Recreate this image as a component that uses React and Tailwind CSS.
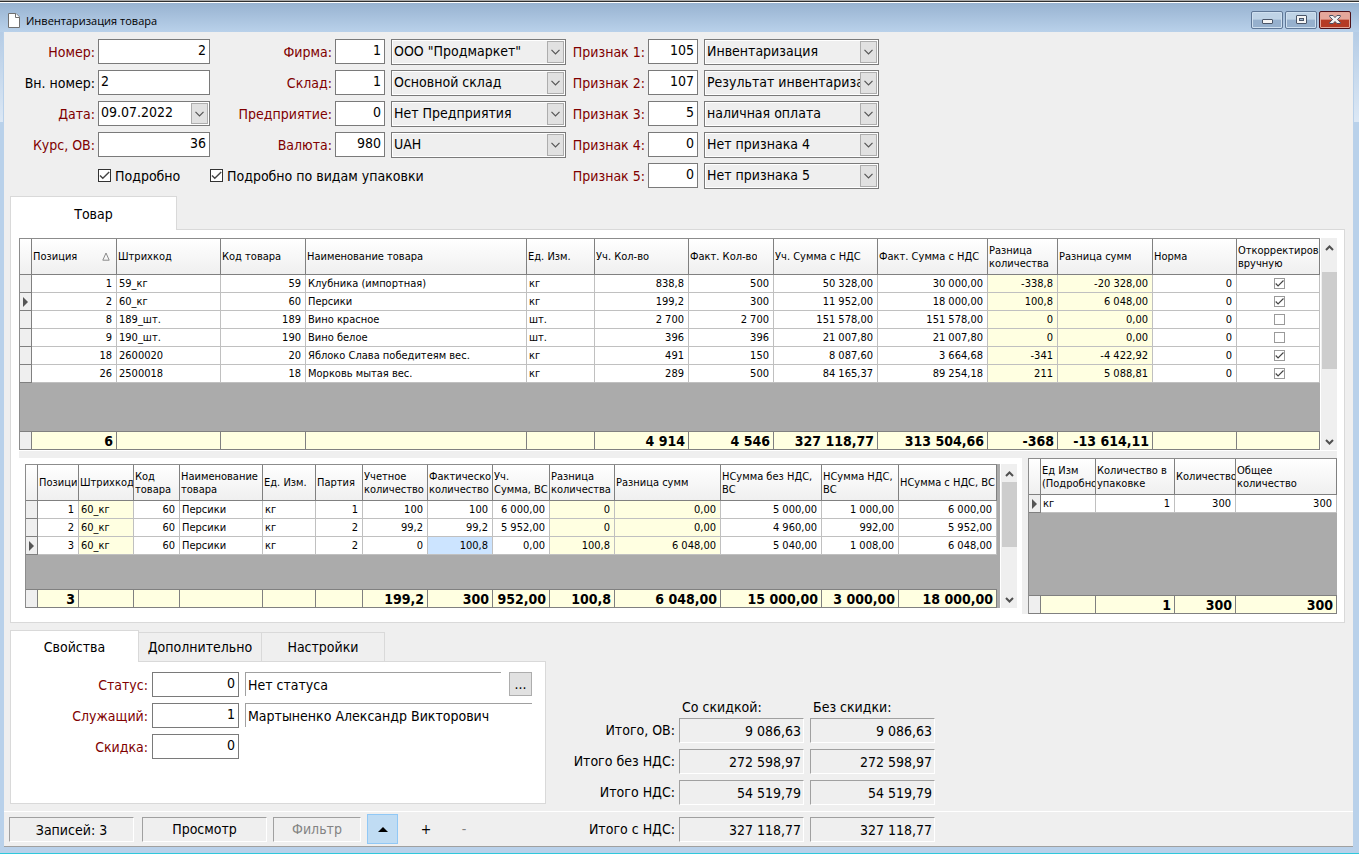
import React from 'react'
import clsx from 'clsx'

const goods = {
  columns: [
    { title: 'Позиция', width: 'w-[85px]', right: true, sorted: true },
    { title: 'Штрихкод', width: 'w-[104px]' },
    { title: 'Код товара', width: 'w-[85px]', right: true },
    { title: 'Наименование товара', width: 'w-[221px]' },
    { title: 'Ед. Изм.', width: 'w-[68px]' },
    { title: 'Уч. Кол-во', width: 'w-[94px]', right: true },
    { title: 'Факт. Кол-во', width: 'w-[85px]', right: true },
    { title: 'Уч. Сумма с НДС', width: 'w-[104px]', right: true },
    { title: 'Факт. Сумма с НДС', width: 'w-[110px]', right: true },
    { title: 'Разница\nколичества', width: 'w-[70px]', right: true, yellow: true },
    { title: 'Разница сумм', width: 'w-[95px]', right: true, yellow: true },
    { title: 'Норма', width: 'w-[84px]', right: true },
    { title: 'Откорректиров\nвручную', width: 'w-[83px]', check: true },
  ],
  rows: [
    ['1', '59_кг', '59', 'Клубника (импортная)', 'кг', '838,8', '500', '50 328,00', '30 000,00', '-338,8', '-20 328,00', '0', true],
    ['2', '60_кг', '60', 'Персики', 'кг', '199,2', '300', '11 952,00', '18 000,00', '100,8', '6 048,00', '0', true],
    ['8', '189_шт.', '189', 'Вино красное', 'шт.', '2 700', '2 700', '151 578,00', '151 578,00', '0', '0,00', '0', false],
    ['9', '190_шт.', '190', 'Вино белое', 'шт.', '396', '396', '21 007,80', '21 007,80', '0', '0,00', '0', false],
    ['18', '2600020', '20', 'Яблоко Слава победитеям вес.', 'кг', '491', '150', '8 087,60', '3 664,68', '-341', '-4 422,92', '0', true],
    ['26', '2500018', '18', 'Морковь мытая вес.', 'кг', '289', '500', '84 165,37', '89 254,18', '211', '5 088,81', '0', true],
  ],
  totals: ['6', '', '', '', '', '4 914', '4 546', '327 118,77', '313 504,66', '-368', '-13 614,11', '', ''],
}

const batches = {
  columns: [
    { title: 'Позици', width: 'w-[41px]', right: true },
    { title: 'Штрихкод', width: 'w-[55px]', yellow: true },
    { title: 'Код\nтовара', width: 'w-[46px]', right: true },
    { title: 'Наименование\nтовара', width: 'w-[83px]' },
    { title: 'Ед. Изм.', width: 'w-[53px]' },
    { title: 'Партия', width: 'w-[47px]', right: true },
    { title: 'Учетное\nколичество', width: 'w-[65px]', right: true },
    { title: 'Фактическо\nколичество', width: 'w-[65px]', right: true },
    { title: 'Уч.\nСумма, ВС', width: 'w-[57px]', right: true },
    { title: 'Разница\nколичества', width: 'w-[65px]', right: true, yellow: true },
    { title: 'Разница сумм', width: 'w-[106px]', right: true, yellow: true },
    { title: 'НСумма без НДС,\nВС', width: 'w-[101px]', right: true },
    { title: 'НСумма НДС,\nВС', width: 'w-[77px]', right: true },
    { title: 'НСумма с НДС, ВС', width: 'w-[98px]', right: true },
  ],
  rows: [
    ['1', '60_кг', '60', 'Персики', 'кг', '1', '100', '100', '6 000,00', '0', '0,00', '5 000,00', '1 000,00', '6 000,00'],
    ['2', '60_кг', '60', 'Персики', 'кг', '2', '99,2', '99,2', '5 952,00', '0', '0,00', '4 960,00', '992,00', '5 952,00'],
    ['3', '60_кг', '60', 'Персики', 'кг', '2', '0', '100,8', '0,00', '100,8', '6 048,00', '5 040,00', '1 008,00', '6 048,00'],
  ],
  totals: ['3', '', '', '', '', '', '199,2', '300', '952,00', '100,8', '6 048,00', '15 000,00', '3 000,00', '18 000,00'],
}

const packs = {
  columns: [
    { title: 'Ед Изм\n(Подробно', width: 'w-[55px]' },
    { title: 'Количество в\nупаковке', width: 'w-[79px]', right: true },
    { title: 'Количество', width: 'w-[61px]', right: true },
    { title: 'Общее\nколичество', width: 'w-[101px]', right: true },
  ],
  rows: [['кг', '1', '300', '300']],
  totals: ['', '1', '300', '300'],
}

const Tick = ({ label, checked, small }) => (
  <span className={clsx('relative block shrink-0', small ? 'size-[11px]' : 'size-[13px]')}>
    <input
      type="checkbox"
      id={small ? undefined : label}
      aria-label={small ? label : undefined}
      defaultChecked={checked}
      className={clsx(
        'peer block size-full appearance-none border bg-white',
        small ? 'border-[#9a9a9a]' : 'border-[#333333]'
      )}
    />
    <svg
      viewBox="0 0 13 13"
      className="pointer-events-none absolute inset-0 hidden size-full peer-checked:block"
      fill="none"
      stroke="#444444"
      strokeWidth="1.4"
    >
      <path d="M2 6.5 4.8 9.3 11.2 3" />
    </svg>
  </span>
)

const ArrowButton = () => (
  <span className="pointer-events-none absolute top-0.5 right-0.5 bottom-0.5 grid w-[17px] place-items-center border border-[#adadad] bg-[#e1e1e1]">
    <svg width="9" height="6" viewBox="0 0 9 6" fill="none" stroke="#555555" strokeWidth="1.2">
      <path d="M.5.8 4.5 4.8 8.5.8" />
    </svg>
  </span>
)

const Label = ({ id, className, children }) => (
  <label htmlFor={id} className={clsx('pt-1 text-right leading-[19px] whitespace-nowrap', className)}>
    {children}
  </label>
)

const inputStyle = 'h-[25px] border border-[#7a7a7a] bg-white px-[3px] pb-[3px] outline-none'

const RefField = ({ id, label, code, value, labelWidth }) => (
  <div className="flex h-[25px]">
    <Label id={id} className={clsx('mr-[3px] text-[#800000]', labelWidth)}>{label}</Label>
    <input id={id} defaultValue={code} className={clsx(inputStyle, 'mr-1.5 w-[50px] text-right')} />
    <div className="relative h-[26px] w-[175px]">
      <select
        aria-label={label}
        className="h-full w-full appearance-none overflow-hidden border border-[#7a7a7a] bg-[#efefef] pr-[18px] pb-[3px] pl-0.5 whitespace-nowrap shadow-[inset_0_0_0_1px_#ffffff] outline-none"
      >
        <option>{value}</option>
      </select>
      <ArrowButton />
    </div>
  </div>
)

const Grid = ({ data, name, current, selected, filler, fillerBg = 'bg-[#ababab]' }) => (
  <div className="min-w-0 flex-1 border-t border-l border-[#8c8c8c]">
    <table aria-label={name} className="w-full table-fixed border-separate border-spacing-0 text-[11px] leading-[14px]">
      <thead>
        <tr className="bg-linear-to-b from-white to-[#efefef]">
          <th className="h-9 w-3 border-r border-b border-[#808080] p-0" />
          {data.columns.map((col, i) => (
            <th
              key={i}
              className={clsx('h-9 border-r border-b border-[#808080] p-0 pl-px text-left font-normal', col.width)}
            >
              <div className="flex items-center justify-between overflow-hidden leading-[13px]">
                <span className="min-w-0 overflow-hidden whitespace-pre">{col.title}</span>
                {col.sorted && (
                  <svg width="8" height="9" viewBox="0 0 8 9" fill="none" stroke="#8a8a8a" className="mr-1.5">
                    <path d="M4 1 .8 8.2h6.4z" />
                  </svg>
                )}
              </div>
            </th>
          ))}
        </tr>
      </thead>
      <tbody>
        {data.rows.map((row, r) => (
          <tr key={r}>
            <td className="h-[18px] border-r border-b border-[#808080] bg-[#efefef] p-0">
              {r === current && (
                <svg width="5" height="10" viewBox="0 0 5 10" className="ml-[3px]">
                  <path d="M0 0 5 5 0 10z" fill="#555555" />
                </svg>
              )}
            </td>
            {row.map((cell, c) => {
              const col = data.columns[c]
              return (
                <td
                  key={c}
                  className={clsx(
                    'h-[18px] overflow-hidden border-r border-b border-[#c0c0c0] p-0 whitespace-nowrap',
                    col.right ? 'pr-1 text-right' : 'pl-0.5',
                    r === current && c === selected ? 'bg-[#cce4ff]' : col.yellow ? 'bg-[#ffffe1]' : 'bg-white'
                  )}
                >
                  {col.check ? (
                    <span className="flex justify-center">
                      <Tick small label={'Откорректировано ' + row[0]} checked={cell} />
                    </span>
                  ) : (
                    cell
                  )}
                </td>
              )
            })}
          </tr>
        ))}
        <tr>
          <td
            colSpan={data.columns.length + 1}
            className={clsx('border-b border-[#808080] p-0', filler, fillerBg)}
          />
        </tr>
      </tbody>
      <tfoot>
        <tr>
          <td className="h-[18px] border-r border-b border-[#808080] bg-[#efefef] p-0" />
          {data.totals.map((total, i) => (
            <td
              key={i}
              className="h-[18px] overflow-hidden border-r border-b border-[#808080] bg-[#ffffe1] p-0 pt-0.5 pr-[3px] text-right text-sm leading-[15px] font-bold whitespace-nowrap"
            >
              {total}
            </td>
          ))}
        </tr>
      </tfoot>
    </table>
  </div>
)

const Scrollbar = ({ gap, thumb }) => (
  <div className="ml-px flex w-4 shrink-0 flex-col items-center bg-[#efefef]">
    <svg width="9" height="6" viewBox="0 0 9 6" fill="none" stroke="#505050" strokeWidth="2" className="mt-[7px]">
      <path d="M1 5 4.5 1.5 8 5" />
    </svg>
    <div className={clsx('w-[15px] bg-[#cdcdcd]', gap, thumb)} />
    <svg width="9" height="6" viewBox="0 0 9 6" fill="none" stroke="#505050" strokeWidth="2" className="mt-auto mb-[5px]">
      <path d="M1 1 4.5 4.5 8 1" />
    </svg>
  </div>
)

const sunken = 'border border-t-[#a0a0a0] border-r-white border-b-white border-l-[#a0a0a0]'

const TotalsRow = ({ label, withDiscount, withoutDiscount }) => (
  <div className="flex h-[25px] leading-[25px]">
    <span className="mr-1 w-[129px] text-right whitespace-nowrap">{label}</span>
    <output className={clsx(sunken, 'mr-1.5 w-[125px] pr-0.5 text-right')}>{withDiscount}</output>
    <output className={clsx(sunken, 'w-[125px] pr-0.5 text-right')}>{withoutDiscount}</output>
  </div>
)

const TitleButton = ({ label, red, children }) => (
  <button
    aria-label={label}
    className={clsx(
      'grid h-[18px] w-8 place-items-center rounded-[2px] border',
      red
        ? 'border-[#4d1018] bg-linear-to-b from-[#e5a79b] from-45% to-[#b53a24] to-50% shadow-[inset_0_0_0_1px_#e3a598]'
        : 'border-[#5f7796] bg-linear-to-b from-[#bfd3e6] from-45% to-[#96b0cd] to-50% shadow-[inset_0_0_0_1px_#cfe0f0]'
    )}
  >
    {children}
  </button>
)

const TitleBar = () => (
  <header className="flex h-[29px] items-start bg-linear-to-b from-[#98b3d1] to-[#b9d1ea] pr-2 pl-2">
    <svg width="12" height="15" viewBox="0 0 12 15" className="mt-[10px] mr-1.5" fill="white" stroke="#707070">
      <path d="M.5.5h7.5l3.5 3.5v10.5H.5z" />
      <path d="M7.5.5v4h4" />
    </svg>
    <h1 className="flex-1 pt-[9px] font-['Open_Sans','Noto_Sans',sans-serif] text-[11px] leading-[17px]">
      Инвентаризация товара
    </h1>
    <div className="flex gap-0.5 pt-2">
      <TitleButton label="Свернуть">
        <svg width="11" height="16" viewBox="0 0 11 16">
          <rect x=".5" y="7.5" width="10" height="4" rx=".5" fill="#f5f5f5" stroke="#4a5568" />
        </svg>
      </TitleButton>
      <TitleButton label="Развернуть">
        <svg width="11" height="16" viewBox="0 0 11 16">
          <rect x=".5" y="3.5" width="10" height="8" rx=".5" fill="#f5f5f5" stroke="#4a5568" />
          <rect x="3.5" y="6.5" width="4" height="2" fill="#9fb8d3" stroke="#4a5568" />
        </svg>
      </TitleButton>
      <TitleButton label="Закрыть" red>
        <svg width="12" height="16" viewBox="0 0 12 16">
          <path
            d="M.7 3.5h3.4L6 5.6l1.9-2.1h3.4v1.3L8.4 7.5l2.9 2.8v1.2H7.9L6 9.5l-1.9 2H.7v-1.2l2.9-2.8L.7 4.8z"
            fill="#f3f3f3"
            stroke="#4e5061"
          />
        </svg>
      </TitleButton>
    </div>
  </header>
)

const HeaderForm = () => (
  <form className="flex pt-[7px]">
    <div className="flex flex-col gap-1.5">
      <div className="flex">
        <div className="flex flex-col gap-1.5">
          <div className="flex">
            <Label id="num" className="mr-[3px] w-[91px] text-[#800000]">Номер:</Label>
            <input id="num" defaultValue="2" className={clsx(inputStyle, 'w-28 text-right')} />
          </div>
          <div className="flex">
            <Label id="innum" className="mr-[3px] w-[91px]">Вн. номер:</Label>
            <input id="innum" defaultValue="2" className={clsx(inputStyle, 'w-28 pl-0.5')} />
          </div>
          <div className="flex">
            <Label id="date" className="mr-[3px] w-[91px] text-[#800000]">Дата:</Label>
            <div className="relative w-28">
              <input id="date" defaultValue="09.07.2022" className={clsx(inputStyle, 'w-full pl-0.5')} />
              <ArrowButton />
            </div>
          </div>
          <div className="flex">
            <Label id="rate" className="mr-[3px] w-[91px] text-[#800000]">Курс, ОВ:</Label>
            <input id="rate" defaultValue="36" className={clsx(inputStyle, 'w-28 text-right')} />
          </div>
        </div>
        <div className="flex flex-col gap-1.5">
          <RefField id="firm" label="Фирма:" code="1" value={'ООО "Продмаркет"'} labelWidth="w-[122px]" />
          <RefField id="stock" label="Склад:" code="1" value="Основной склад" labelWidth="w-[122px]" />
          <RefField id="company" label="Предприятие:" code="0" value="Нет Предприятия" labelWidth="w-[122px]" />
          <RefField id="currency" label="Валюта:" code="980" value="UAH" labelWidth="w-[122px]" />
        </div>
      </div>
      <div className="flex h-[25px] items-center pl-[94px]">
        <div className="flex w-28 items-center gap-1">
          <Tick label="Подробно" checked />
          <label htmlFor="Подробно">Подробно</label>
        </div>
        <div className="flex items-center gap-1">
          <Tick label="Подробно по видам упаковки" checked />
          <label htmlFor="Подробно по видам упаковки">Подробно по видам упаковки</label>
        </div>
      </div>
    </div>
    <div className="flex flex-col gap-1.5">
      <RefField id="sign1" label="Признак 1:" code="105" value="Инвентаризация" labelWidth="w-[79px]" />
      <RefField id="sign2" label="Признак 2:" code="107" value="Результат инвентариза" labelWidth="w-[79px]" />
      <RefField id="sign3" label="Признак 3:" code="5" value="наличная оплата" labelWidth="w-[79px]" />
      <RefField id="sign4" label="Признак 4:" code="0" value="Нет признака 4" labelWidth="w-[79px]" />
      <RefField id="sign5" label="Признак 5:" code="0" value="Нет признака 5" labelWidth="w-[79px]" />
    </div>
  </form>
)

const GoodsPanel = () => (
  <section className="mt-2 mr-2 ml-1.5">
    <button className="relative -mb-px block h-[34px] w-[167px] border border-b-0 border-[#d9d9d9] bg-white">
      Товар
    </button>
    <div className="border border-[#d9d9d9] bg-white pt-2 pr-[7px] pb-2 pl-2">
      <div className="flex">
        <Grid data={goods} name="Товар" current={1} filler="h-[49px]" />
        <Scrollbar gap="mt-[21px]" thumb="h-[97px]" />
      </div>
      <div className="mt-px h-[7px] bg-[#efefef]" />
      <div className="flex">
        <div className="flex flex-1 items-start pt-1.5 pr-[5px] pl-1.5">
          <div className="flex flex-1 bg-[#ababab] pr-[3px]">
            <Grid data={batches} name="Партии" current={2} selected={7} filler="h-[35px]" />
          </div>
          <div className="flex self-stretch pb-1.5">
            <Scrollbar gap="mt-[5px]" thumb="h-[65px]" />
          </div>
        </div>
        <div className="w-1.5 bg-[#efefef]" />
        <div className="flex w-[309px]">
          <Grid data={packs} name="Упаковки" current={0} filler="h-[83px]" />
        </div>
      </div>
    </div>
  </section>
)

const PropertyField = ({ id, label, value }) => (
  <>
    <Label id={id} className="mr-1 w-[137px] text-[#800000]">{label}</Label>
    <input id={id} defaultValue={value} className={clsx(inputStyle, 'mr-1.5 w-[87px] text-right')} />
  </>
)

const textCell = 'h-6 border-t border-l border-[#a0a0a0] bg-white pl-0.5 outline-none'

const Properties = () => (
  <section className="ml-1.5 w-[536px]">
    <div className="-mb-px flex items-end">
      <button className="relative h-8 w-[129px] border border-b-0 border-[#d9d9d9] bg-white">Свойства</button>
      <button className="h-[30px] w-[123px] border border-l-0 border-[#d9d9d9]">Дополнительно</button>
      <button className="h-[30px] w-[123px] border border-l-0 border-[#d9d9d9]">Настройки</button>
    </div>
    <div className="flex flex-col gap-1.5 border border-[#d9d9d9] bg-white pt-2.5 pb-11">
      <div className="flex">
        <PropertyField id="status" label="Статус:" value="0" />
        <input aria-label="Название статуса" defaultValue="Нет статуса" className={clsx(textCell, 'w-64')} />
        <button aria-label="Выбрать статус" className="ml-2 h-6 w-[23px] border border-[#adadad] bg-[#e1e1e1]">
          ...
        </button>
      </div>
      <div className="flex">
        <PropertyField id="employee" label="Служащий:" value="1" />
        <input aria-label="Имя служащего" defaultValue="Мартыненко Александр Викторович" className={clsx(textCell, 'w-[287px]')} />
      </div>
      <div className="flex">
        <PropertyField id="discount" label="Скидка:" value="0" />
      </div>
    </div>
  </section>
)

const Totals = () => (
  <section className="-mb-px flex flex-col gap-1.5 self-end">
    <div className="-mb-1.5 flex pl-[136px] leading-[22px]">
      <span className="w-[131px]">Со скидкой:</span>
      <span>Без скидки:</span>
    </div>
    <TotalsRow label="Итого, ОВ:" withDiscount="9 086,63" withoutDiscount="9 086,63" />
    <TotalsRow label="Итого без НДС:" withDiscount="272 598,97" withoutDiscount="272 598,97" />
    <TotalsRow label="Итого НДС:" withDiscount="54 519,79" withoutDiscount="54 519,79" />
  </section>
)

const StatusBar = () => (
  <footer className="mt-auto flex h-9 items-center border-t border-b border-t-white border-b-[#a0a0a0] pl-[5px]">
    <div className={clsx(sunken, 'mr-2 h-[25px] w-[125px] text-center leading-[25px]')}>Записей: 3</div>
    <button className={clsx(sunken, 'mr-1.5 h-[25px] w-[125px]')}>Просмотр</button>
    <button disabled className={clsx(sunken, 'mr-1.5 h-[25px] w-[88px] text-[#838383]')}>Фильтр</button>
    <button aria-label="Вверх" className="grid h-[30px] w-[31px] place-items-center border border-[#90c8f6] bg-[#c0dcf3]">
      <svg width="10" height="5" viewBox="0 0 10 5">
        <path d="M0 5 5 0 10 5z" />
      </svg>
    </button>
    <button className="ml-3 h-[30px] w-8">+</button>
    <button className="ml-1.5 h-[30px] w-8 text-[#838383]">-</button>
    <div className="ml-[66px]">
      <TotalsRow label="Итого с НДС:" withDiscount="327 118,77" withoutDiscount="327 118,77" />
    </div>
  </footer>
)

const App = () => (
  <div className="flex min-h-screen flex-col bg-[#b9d1ea] font-['DejaVu_Sans_Condensed','Noto_Sans',sans-serif] text-sm text-black">
    <div className="h-[3px] border-t border-b border-t-[#a8a8a8] border-b-white bg-[#303030]" />
    <TitleBar />
    <div className="flex flex-1">
      <div className="w-1">
        <div className="h-[90px] w-[3px] bg-linear-to-b from-[#b5cce5] to-[#dce8f5]" />
      </div>
      <main className="flex min-w-0 flex-1 flex-col bg-[#efefef]">
        <HeaderForm />
        <GoodsPanel />
        <div className="mt-[7px] mb-[7px] flex">
          <Properties />
          <Totals />
        </div>
        <StatusBar />
      </main>
      <div className="w-1.5 pl-px">
        <div className="h-[90px] bg-linear-to-b from-[#b5cce5] to-[#dce8f5]" />
      </div>
    </div>
    <div className="h-[7px] border-b border-[#2fc8dc]" />
  </div>
)

export default App
